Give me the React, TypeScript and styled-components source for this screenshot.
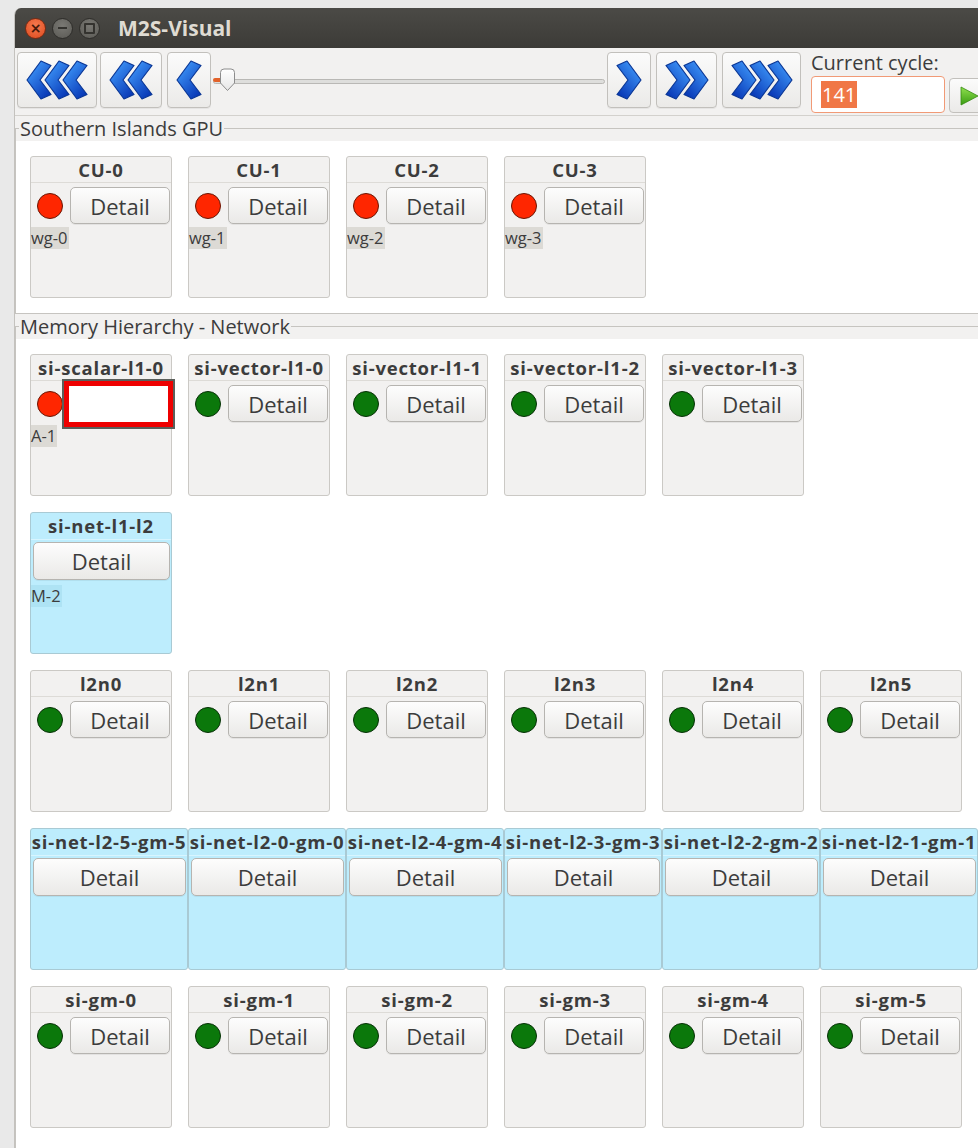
import React, { useId } from 'react';
import styled, { createGlobalStyle } from 'styled-components';

type Lamp = 'red' | 'green';

interface ModuleInfo {
  name: string;
  lamp?: Lamp;
  chip?: string;
  busy?: boolean;
}

const GlobalStyle = createGlobalStyle`
  html, body {
    margin: 0;
    padding: 0;
  }
  body {
    background: #e9e9e9;
    font-family: 'Open Sans', 'Noto Sans', 'DejaVu Sans', sans-serif;
    color: #3c3c3c;
    overflow: hidden;
  }
`;

const gpuUnits: ModuleInfo[] = [0, 1, 2, 3].map((i) => ({
  name: `CU-${i}`,
  lamp: 'red',
  chip: `wg-${i}`,
}));

const l1Caches: ModuleInfo[] = [
  { name: 'si-scalar-l1-0', lamp: 'red', chip: 'A-1', busy: true },
  ...[0, 1, 2, 3].map((i) => ({ name: `si-vector-l1-${i}`, lamp: 'green' as Lamp })),
];

const l2Nodes: ModuleInfo[] = [0, 1, 2, 3, 4, 5].map((i) => ({
  name: `l2n${i}`,
  lamp: 'green',
}));

const l2Nets: ModuleInfo[] = [5, 0, 4, 3, 2, 1].map((i) => ({
  name: `si-net-l2-${i}-gm-${i}`,
}));

const globalMems: ModuleInfo[] = [0, 1, 2, 3, 4, 5].map((i) => ({
  name: `si-gm-${i}`,
  lamp: 'green',
}));

const Chevrons: React.FC<{ count: number; dir: 'left' | 'right' }> = ({ count, dir }) => {
  const gid = useId().replace(/:/g, '');
  const width = 26 + 18 * (count - 1);
  return (
    <svg width={width} height={40} viewBox={`0 0 ${width} 40`}>
      <defs>
        <linearGradient id={gid} x1="0" y1="0" x2="0.7" y2="1">
          <stop offset="0" stopColor="#8ccaff" />
          <stop offset="0.3" stopColor="#3587ee" />
          <stop offset="1" stopColor="#0a3bb8" />
        </linearGradient>
      </defs>
      <g transform={dir === 'right' ? `translate(${width} 0) scale(-1 1)` : undefined}>
        {Array.from({ length: count }).map((_, i) => (
          <polygon
            key={i}
            transform={`translate(${i * 18} 0)`}
            points="1,20 15,1 25,5.5 14,20 25,34.5 15,39"
            fill={`url(#${gid})`}
            stroke="#0b3795"
            strokeWidth="1.2"
            strokeLinejoin="round"
          />
        ))}
      </g>
    </svg>
  );
};

const SliderHandle = () => (
  <svg width={17} height={24} viewBox="0 0 17 24">
    <defs>
      <linearGradient id="handleFill" x1="0" y1="0" x2="0" y2="1">
        <stop offset="0" stopColor="#ffffff" />
        <stop offset="1" stopColor="#e6e6e6" />
      </linearGradient>
    </defs>
    <path
      d="M1.5,4.5 Q1.5,1 5,1 L12,1 Q15.5,1 15.5,4.5 L15.5,15 L8.5,22.5 L1.5,15 Z"
      fill="url(#handleFill)"
      stroke="#8c8c8c"
      strokeWidth="1"
    />
  </svg>
);

const PlayIcon = () => (
  <svg width={22} height={22} viewBox="0 0 22 22">
    <defs>
      <linearGradient id="playFill" x1="0" y1="0" x2="0" y2="1">
        <stop offset="0" stopColor="#8fe04f" />
        <stop offset="1" stopColor="#3a9c12" />
      </linearGradient>
    </defs>
    <path d="M3,2 L20,11 L3,20 Z" fill="url(#playFill)" stroke="#358a12" strokeWidth="0.8" />
  </svg>
);

const ModulePanel: React.FC<{ info: ModuleInfo; net?: boolean; wide?: boolean }> = ({
  info,
  net,
  wide,
}) => (
  <Panel $net={net} $wide={wide}>
    <PanelTitle $net={net} $clip={wide}>
      {info.name}
    </PanelTitle>
    {net ? (
      <NetButton>Detail</NetButton>
    ) : (
      <StatusRow>
        <LampDot $lamp={info.lamp ?? 'green'} />
        {info.busy ? (
          <ButtonSlot>
            <EditBox />
          </ButtonSlot>
        ) : (
          <DetailButton>Detail</DetailButton>
        )}
      </StatusRow>
    )}
    {info.chip && <Chip $net={net}>{info.chip}</Chip>}
  </Panel>
);

export default function App() {
  return (
    <>
      <GlobalStyle />
      <Desktop>
        <Window>
          <TitleBar>
            <CloseButton>×</CloseButton>
            <WinButton>
              <MinBar />
            </WinButton>
            <WinButton>
              <MaxBox />
            </WinButton>
            <WindowTitle>M2S-Visual</WindowTitle>
          </TitleBar>

          <Toolbar>
            <ToolButton $w={80}>
              <Chevrons count={3} dir="left" />
            </ToolButton>
            <ToolButton $w={62} $gap={3}>
              <Chevrons count={2} dir="left" />
            </ToolButton>
            <ToolButton $w={44} $gap={5}>
              <Chevrons count={1} dir="left" />
            </ToolButton>
            <Slider>
              <Track />
              <TrackFill />
              <HandleSpot>
                <SliderHandle />
              </HandleSpot>
            </Slider>
            <ToolButton $w={44}>
              <Chevrons count={1} dir="right" />
            </ToolButton>
            <ToolButton $w={61} $gap={5}>
              <Chevrons count={2} dir="right" />
            </ToolButton>
            <ToolButton $w={79} $gap={5}>
              <Chevrons count={3} dir="right" />
            </ToolButton>
            <CycleGroup>
              <CycleLabel>Current cycle:</CycleLabel>
              <CycleRow>
                <CycleInput>
                  <Selected>141</Selected>
                </CycleInput>
                <PlayButton>
                  <PlayIcon />
                </PlayButton>
              </CycleRow>
            </CycleGroup>
          </Toolbar>

          <Frame>
            <FrameLabel>Southern Islands GPU</FrameLabel>
            <Viewport>
              <PanelRow>
                {gpuUnits.map((m) => (
                  <ModulePanel key={m.name} info={m} />
                ))}
              </PanelRow>
            </Viewport>
          </Frame>

          <Frame $fill>
            <FrameLabel>Memory Hierarchy - Network</FrameLabel>
            <Viewport>
              <PanelRow>
                {l1Caches.map((m) => (
                  <ModulePanel key={m.name} info={m} />
                ))}
              </PanelRow>
              <PanelRow>
                <ModulePanel info={{ name: 'si-net-l1-l2', chip: 'M-2' }} net />
              </PanelRow>
              <PanelRow>
                {l2Nodes.map((m) => (
                  <ModulePanel key={m.name} info={m} />
                ))}
              </PanelRow>
              <PanelRow $tight>
                {l2Nets.map((m) => (
                  <ModulePanel key={m.name} info={m} net wide />
                ))}
              </PanelRow>
              <PanelRow>
                {globalMems.map((m) => (
                  <ModulePanel key={m.name} info={m} />
                ))}
              </PanelRow>
            </Viewport>
          </Frame>
        </Window>
      </Desktop>
    </>
  );
}

const Desktop = styled.div`
  width: 978px;
  height: 1148px;
  box-sizing: border-box;
  padding: 8px 0 0 14px;
  overflow: hidden;
`;

const Window = styled.div`
  width: 1010px;
  height: 1160px;
  display: flex;
  flex-direction: column;
  background: #f2f1f0;
  border-left: 1px solid #c4c2be;
  border-radius: 7px 0 0 0;
  overflow: hidden;
`;

const TitleBar = styled.div`
  height: 40px;
  flex: none;
  display: flex;
  align-items: center;
  gap: 6px;
  padding-left: 10px;
  background: linear-gradient(#4b4a46, #3c3b37);
`;

const WinButton = styled.span`
  width: 21px;
  height: 21px;
  box-sizing: border-box;
  border-radius: 50%;
  border: 1px solid #2e2d2a;
  background: radial-gradient(circle at 50% 35%, #7a7974, #5a5954);
  display: flex;
  align-items: center;
  justify-content: center;
`;

const CloseButton = styled(WinButton)`
  border-color: #7a2a12;
  background: radial-gradient(circle at 50% 35%, #f77a4f, #dc4a1e);
  color: #4a1a0a;
  font-family: 'DejaVu Sans', sans-serif;
  font-size: 14px;
  font-weight: 700;
  line-height: 1;
`;

const MinBar = styled.span`
  width: 9px;
  height: 2px;
  background: #34332f;
`;

const MaxBox = styled.span`
  width: 7px;
  height: 7px;
  border: 2px solid #34332f;
  border-radius: 1px;
`;

const WindowTitle = styled.span`
  margin-left: 12px;
  color: #dfdbd2;
  font-size: 21px;
  font-weight: 700;
`;

const Toolbar = styled.div`
  height: 68px;
  flex: none;
  display: flex;
  align-items: flex-start;
  padding: 4px 0 0 2px;
  box-sizing: border-box;
  border-bottom: 1px solid #d3d1cd;
`;

const ToolButton = styled.div<{ $w: number; $gap?: number }>`
  width: ${(p) => p.$w}px;
  height: 56px;
  margin-left: ${(p) => p.$gap ?? 0}px;
  box-sizing: border-box;
  flex: none;
  display: flex;
  align-items: center;
  justify-content: center;
  border: 1px solid #c2c0bc;
  border-radius: 4px;
  background: linear-gradient(#fbfbfb, #ebeae8);
  box-shadow: 0 1px 0 rgba(0, 0, 0, 0.05);
`;

const Slider = styled.div`
  position: relative;
  width: 396px;
  height: 56px;
  flex: none;
  display: flex;
  align-items: center;
`;

const Track = styled.div`
  flex: 1;
  height: 5px;
  margin: 3px 2px 0;
  box-sizing: border-box;
  border: 1px solid #b9b8b5;
  border-radius: 3px;
  background: #dededc;
`;

const TrackFill = styled.div`
  position: absolute;
  left: 2px;
  top: 26px;
  width: 8px;
  height: 4px;
  border-radius: 2px 0 0 2px;
  background: #e2622a;
`;

const HandleSpot = styled.div`
  position: absolute;
  left: 8px;
  top: 16px;
  height: 24px;
`;

const CycleGroup = styled.div`
  margin-left: 10px;
  display: flex;
  flex-direction: column;
`;

const CycleLabel = styled.div`
  height: 27px;
  margin-top: -3px;
  font-size: 20px;
  line-height: 27px;
  color: #3c3c3c;
`;

const CycleRow = styled.div`
  display: flex;
  align-items: flex-end;
  gap: 4px;
`;

const CycleInput = styled.div`
  width: 134px;
  height: 37px;
  box-sizing: border-box;
  display: flex;
  align-items: center;
  padding-left: 9px;
  border: 1px solid #f19a76;
  border-radius: 4px;
  background: #ffffff;
`;

const Selected = styled.span`
  font-size: 20px;
  line-height: 27px;
  padding: 0 1px;
  color: #ffffff;
  background: #f07746;
`;

const PlayButton = styled.div`
  width: 44px;
  height: 35px;
  box-sizing: border-box;
  display: flex;
  align-items: center;
  padding-left: 8px;
  border: 1px solid #c2c0bc;
  border-radius: 4px;
  background: linear-gradient(#fbfbfb, #ebeae8);
`;

const Frame = styled.fieldset<{ $fill?: boolean }>`
  margin: 0;
  padding: 0;
  min-width: 0;
  flex: ${(p) => (p.$fill ? '1' : 'none')};
  border: 1px solid #c6c4c0;
  border-right: none;
  display: flex;
  flex-direction: column;
`;

const FrameLabel = styled.legend`
  margin-left: 3px;
  padding: 0 1px;
  font-size: 20px;
  line-height: 25px;
  color: #3c3c3c;
`;

const Viewport = styled.div`
  flex: 1;
  background: #ffffff;
  padding: 15px 14px;
  display: flex;
  flex-direction: column;
  gap: 16px;
`;

const PanelRow = styled.div<{ $tight?: boolean }>`
  display: flex;
  gap: ${(p) => (p.$tight ? 0 : 16)}px;
`;

const Panel = styled.div<{ $net?: boolean; $wide?: boolean }>`
  width: ${(p) => (p.$wide ? 158 : 142)}px;
  height: 142px;
  flex: none;
  box-sizing: border-box;
  display: flex;
  flex-direction: column;
  border: 1px solid ${(p) => (p.$net ? '#a9cad4' : '#cbc9c5')};
  border-radius: 3px;
  background: ${(p) => (p.$net ? '#bdedfd' : '#f2f1f0')};
`;

/* names too long for a wide net cell are cut at its right edge */
const PanelTitle = styled.div<{ $net?: boolean; $clip?: boolean }>`
  height: ${(p) => (p.$net ? 26 : 25)}px;
  line-height: ${(p) => (p.$net ? 26 : 25)}px;
  flex: none;
  overflow: ${(p) => (p.$clip ? 'hidden' : 'visible')};
  white-space: nowrap;
  text-align: center;
  font-size: 18.5px;
  letter-spacing: 0.8px;
  font-weight: 700;
  color: #3c3c3c;
  border-bottom: 1px solid ${(p) => (p.$net ? '#d8f5ff' : '#dddbd7')};
`;

const StatusRow = styled.div`
  display: flex;
  align-items: center;
  gap: 7px;
  padding: 4px 0 0 6px;
`;

const LampDot = styled.span<{ $lamp: Lamp }>`
  width: 26px;
  height: 26px;
  flex: none;
  box-sizing: border-box;
  border-radius: 50%;
  border: 1px solid ${(p) => (p.$lamp === 'red' ? '#6a1604' : '#063006')};
  background: ${(p) => (p.$lamp === 'red' ? '#ff2600' : '#0b780b')};
`;

const DetailButton = styled.div`
  width: 100px;
  height: 37px;
  flex: none;
  box-sizing: border-box;
  display: flex;
  align-items: center;
  justify-content: center;
  font-size: 22px;
  color: #3c3c3c;
  border: 1px solid #b6b4b0;
  border-radius: 5px;
  background: linear-gradient(#fdfdfd, #eae9e7);
  box-shadow: 0 1px 0 rgba(0, 0, 0, 0.06);
`;

const NetButton = styled(DetailButton)`
  width: auto;
  height: 38px;
  margin: 2px 1px 0 2px;
`;

const ButtonSlot = styled.div`
  position: relative;
  width: 100px;
  height: 37px;
  flex: none;
`;

const EditBox = styled.div`
  position: absolute;
  left: -6px;
  top: -4px;
  right: -3px;
  bottom: -5px;
  box-sizing: border-box;
  border: 5px solid #ee0000;
  box-shadow: 0 0 0 2px #5b5f5b;
  background: #ffffff;
`;

const Chip = styled.span<{ $net?: boolean }>`
  align-self: flex-start;
  margin-top: ${(p) => (p.$net ? 5 : 3)}px;
  padding: 0 1px 0 0;
  font-size: 16.5px;
  line-height: 22px;
  color: #3c3c3c;
  background: ${(p) => (p.$net ? '#aee3f4' : '#dcdad5')};
`;
